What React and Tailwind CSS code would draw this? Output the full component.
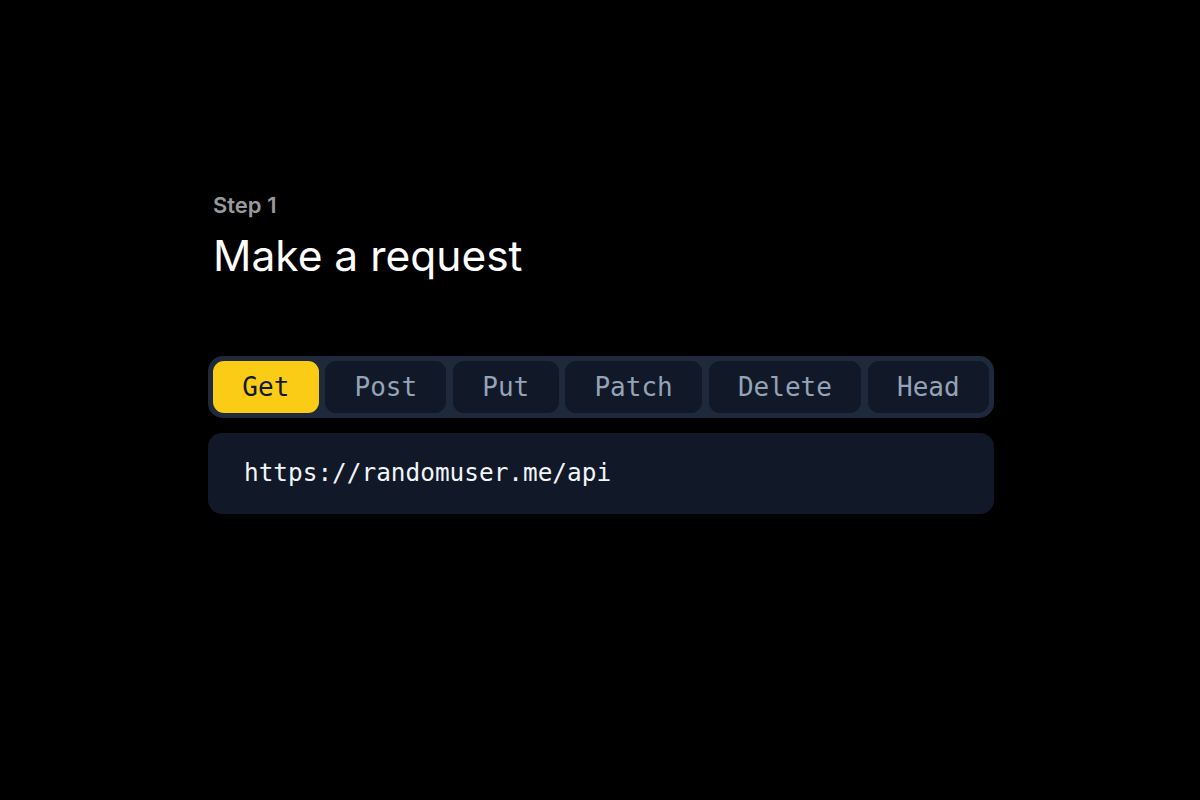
import React, { useState } from 'react';

const methods = ['Get', 'Post', 'Put', 'Patch', 'Delete', 'Head'];

const App = () => {
    const [active, setActive] = useState('Get');

    return (
        <div className="min-h-[800px] w-full bg-black pl-[2px] pt-[191px]" style={{ fontFamily: 'Inter, "Noto Sans", sans-serif' }}>
            <div className="mx-auto w-[786px]">
                <div className="pl-[5px]">
                    <p className="text-[22px] leading-[28px] font-semibold text-[#9a9a9a]">Step 1</p>
                    <h1 className="mt-3 text-[42.5px] leading-[50px] font-normal text-white">Make a request</h1>
                </div>

                {/* method tabs */}
                <div
                    className="mt-[75px] flex gap-[6.5px] rounded-[15px] bg-[#1e293b] p-[5px]"
                    style={{ fontFamily: '"DejaVu Sans Mono", "Liberation Mono", monospace' }}
                >
                    {methods.map(m => (
                        <button
                            key={m}
                            type="button"
                            onClick={() => setActive(m)}
                            className={`flex h-[52px] flex-auto items-center justify-center rounded-[11px] px-7 text-[26px] ${active === m
                                ? 'bg-[#facc15] text-[#111827]'
                                : 'bg-[#111827] text-[#94a3b8]'
                                }`}
                        >
                            {m}
                        </button>
                    ))}
                </div>

                {/* url */}
                <div
                    className="mt-[15px] flex h-[81px] items-center rounded-[14px] bg-[#111827] px-[36px] text-[24.4px] text-[#f1f5f9]"
                    style={{ fontFamily: '"DejaVu Sans Mono", "Liberation Mono", monospace' }}
                >
                    https://randomuser.me/api
                </div>
            </div>
        </div>
    );
};

export default App;
